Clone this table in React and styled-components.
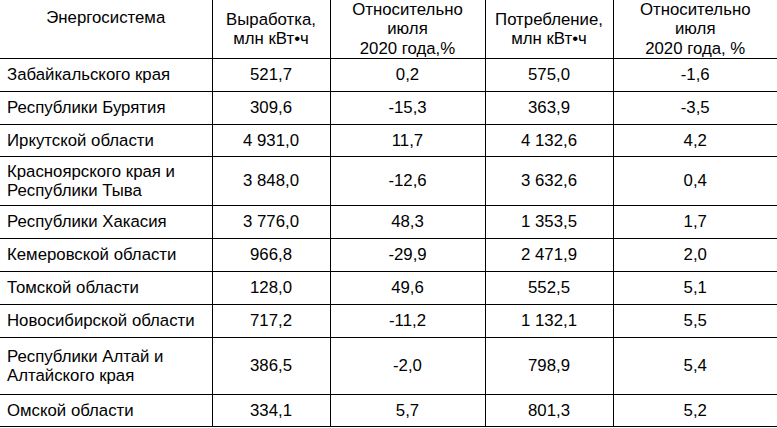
import React from "react";
import styled, { createGlobalStyle } from "styled-components";

const GlobalStyle = createGlobalStyle`
  html, body {
    margin: 0;
    padding: 0;
    background: #fff;
  }
  body {
    font-family: "Liberation Sans", Arial, sans-serif;
    color: #000;
  }
`;

const Table = styled.table`
  width: 777px;
  table-layout: fixed;
  border-collapse: collapse;
  font-size: 16.8px;
  line-height: 1.15;

  th,
  td {
    border: 1px solid #000;
    padding: 0 7px;
    font-weight: normal;
    text-align: center;
    vertical-align: middle;
  }
  tr:first-child th {
    border-top: none;
  }
  th:first-child,
  td:first-child {
    border-left: none;
  }
  th:last-child,
  td:last-child {
    border-right: none;
  }
`;

const Col = styled.col`
  width: ${(p) => p.$w}px;
`;

const Row = styled.tr`
  height: ${(p) => p.$h}px;
`;

const NameHead = styled.th`
  && {
    vertical-align: top;
    padding-top: 8px;
  }
`;

const NameCell = styled.td`
  && {
    text-align: left;
  }
`;

const columns = [212, 118, 155, 128, 164];

const rows = [
  { name: ["Забайкальского края"], gen: "521,7", genRel: "0,2", cons: "575,0", consRel: "-1,6", h: 33 },
  { name: ["Республики Бурятия"], gen: "309,6", genRel: "-15,3", cons: "363,9", consRel: "-3,5", h: 33 },
  { name: ["Иркутской области"], gen: "4 931,0", genRel: "11,7", cons: "4 132,6", consRel: "4,2", h: 32 },
  { name: ["Красноярского края и", "Республики Тыва"], gen: "3 848,0", genRel: "-12,6", cons: "3 632,6", consRel: "0,4", h: 49 },
  { name: ["Республики Хакасия"], gen: "3 776,0", genRel: "48,3", cons: "1 353,5", consRel: "1,7", h: 33 },
  { name: ["Кемеровской области"], gen: "966,8", genRel: "-29,9", cons: "2 471,9", consRel: "2,0", h: 33 },
  { name: ["Томской области"], gen: "128,0", genRel: "49,6", cons: "552,5", consRel: "5,1", h: 33 },
  { name: ["Новосибирской области"], gen: "717,2", genRel: "-11,2", cons: "1 132,1", consRel: "5,5", h: 33 },
  { name: ["Республики Алтай и", "Алтайского края"], gen: "386,5", genRel: "-2,0", cons: "798,9", consRel: "5,4", h: 57 },
  { name: ["Омской области"], gen: "334,1", genRel: "5,7", cons: "801,3", consRel: "5,2", h: 32 },
];

const Lines = ({ items }) =>
  items.map((t, i) => (
    <React.Fragment key={i}>
      {i > 0 && <br />}
      {t}
    </React.Fragment>
  ));

const App = () => {
  return (
    <>
      <GlobalStyle />
      <Table>
        <colgroup>
          {columns.map((w, i) => (
            <Col key={i} $w={w} />
          ))}
        </colgroup>
        <thead>
          <Row $h={58}>
            <NameHead>Энергосистема</NameHead>
            <th>
              <Lines items={["Выработка,", "млн кВт•ч"]} />
            </th>
            <th>
              <Lines items={["Относительно", "июля", "2020 года,%"]} />
            </th>
            <th>
              <Lines items={["Потребление,", "млн кВт•ч"]} />
            </th>
            <th>
              <Lines items={["Относительно", "июля", "2020 года, %"]} />
            </th>
          </Row>
        </thead>
        <tbody>
          {rows.map((r, i) => (
            <Row key={i} $h={r.h}>
              <NameCell>
                <Lines items={r.name} />
              </NameCell>
              <td>{r.gen}</td>
              <td>{r.genRel}</td>
              <td>{r.cons}</td>
              <td>{r.consRel}</td>
            </Row>
          ))}
        </tbody>
      </Table>
    </>
  );
};

export default App;
